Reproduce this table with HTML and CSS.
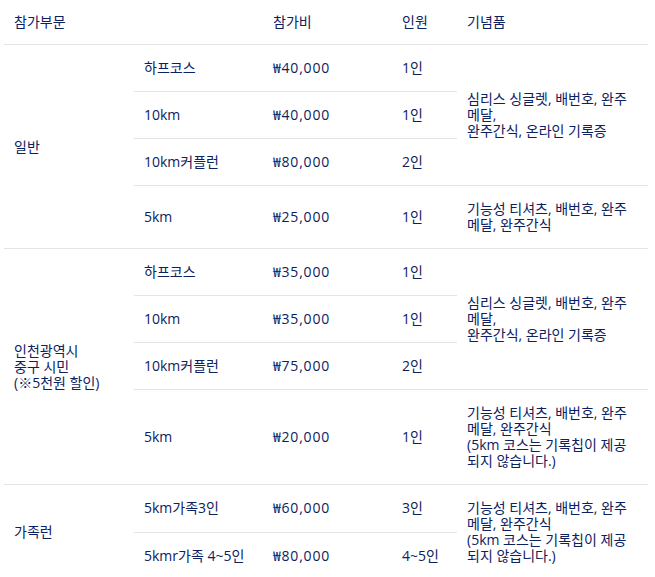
FILE: index.html
```html
<!DOCTYPE html>
<html lang="ko">
<head>
<meta charset="utf-8">
<title>참가부문</title>
<link rel="stylesheet" href="styles.css">
</head>
<body>
<table class="fee-table">
  <colgroup>
    <col class="c-div">
    <col class="c-course">
    <col class="c-fee">
    <col class="c-num">
    <col class="c-gift">
  </colgroup>
  <thead>
    <tr>
      <th>참가부문</th>
      <th></th>
      <th>참가비</th>
      <th>인원</th>
      <th>기념품</th>
    </tr>
  </thead>
  <tbody>
    <tr>
      <td rowspan="4" class="group">일반</td>
      <td>하프코스</td>
      <td class="fee">₩40,000</td>
      <td>1인</td>
      <td rowspan="3">심리스 싱글렛, 배번호, 완주 메달,<br>완주간식, 온라인 기록증</td>
    </tr>
    <tr>
      <td>10km</td>
      <td class="fee">₩40,000</td>
      <td>1인</td>
    </tr>
    <tr>
      <td>10km커플런</td>
      <td class="fee">₩80,000</td>
      <td>2인</td>
    </tr>
    <tr>
      <td>5km</td>
      <td class="fee">₩25,000</td>
      <td>1인</td>
      <td>기능성 티셔츠, 배번호, 완주 메달, 완주간식</td>
    </tr>
    <tr>
      <td rowspan="4" class="group">인천광역시<br>중구 시민<br>(※5천원 할인)</td>
      <td>하프코스</td>
      <td class="fee">₩35,000</td>
      <td>1인</td>
      <td rowspan="3">심리스 싱글렛, 배번호, 완주 메달,<br>완주간식, 온라인 기록증</td>
    </tr>
    <tr>
      <td>10km</td>
      <td class="fee">₩35,000</td>
      <td>1인</td>
    </tr>
    <tr>
      <td>10km커플런</td>
      <td class="fee">₩75,000</td>
      <td>2인</td>
    </tr>
    <tr>
      <td>5km</td>
      <td class="fee">₩20,000</td>
      <td>1인</td>
      <td>기능성 티셔츠, 배번호, 완주 메달, 완주간식<br>(5km 코스는 기록칩이 제공 되지 않습니다.)</td>
    </tr>
    <tr>
      <td rowspan="2" class="group">가족런</td>
      <td>5km가족3인</td>
      <td class="fee">₩60,000</td>
      <td>3인</td>
      <td rowspan="2">기능성 티셔츠, 배번호, 완주 메달, 완주간식<br>(5km 코스는 기록칩이 제공 되지 않습니다.)</td>
    </tr>
    <tr>
      <td>5kmr가족 4~5인</td>
      <td class="fee">₩80,000</td>
      <td>4~5인</td>
    </tr>
  </tbody>
</table>
</body>
</html>
```
FILE: styles.css
```css
body {
  margin: 0;
  background: #ffffff;
  font-family: "Open Sans", "Noto Sans CJK KR", sans-serif;
  font-size: 14px;
  line-height: 16px;
  color: #0c215f;
}

.fee-table {
  margin: 0 4px;
  width: 644px;
  table-layout: fixed;
  border-collapse: separate;
  border-spacing: 0;
}

.c-div { width: 130px; }
.c-course { width: 129px; }
.c-fee { width: 129px; }
.c-num { width: 65px; }
.c-gift { width: 191px; }

.fee-table th,
.fee-table td {
  text-align: left;
  vertical-align: middle;
  font-weight: normal;
  padding: 15px 10px;
  border-bottom: 1px solid #e4e4e4;
  word-break: keep-all;
}

.fee-table th {
  padding-top: 14px;
  padding-bottom: 14px;
}

.fee-table .fee {
  letter-spacing: 0.8px;
}
```
